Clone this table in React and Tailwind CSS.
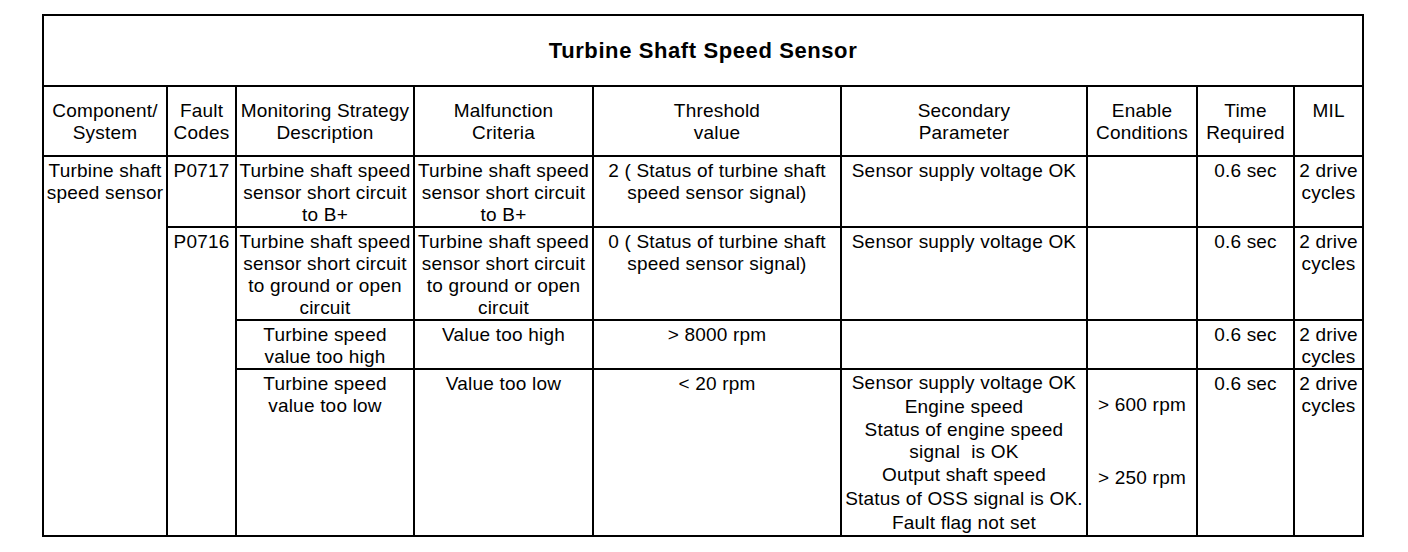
import React from "react"

const th = "border-2 border-black align-top text-center font-normal whitespace-nowrap pt-[13px] px-0"
const td = "border-2 border-black align-top text-center whitespace-nowrap pt-[3px] px-0"

export default function App() {
  return (
    <div className="min-h-screen bg-white pl-[42px] pt-[14px] text-black font-['Liberation_Sans',Arial,sans-serif]">
      <table className="table-fixed border-collapse border-2 border-black w-[1320px] text-[19px] leading-[22px] tracking-[0.2px]">
        <colgroup>
          <col className="w-[124px]" />
          <col className="w-[69px]" />
          <col className="w-[178px]" />
          <col className="w-[179px]" />
          <col className="w-[248px]" />
          <col className="w-[246px]" />
          <col className="w-[110px]" />
          <col className="w-[97px]" />
          <col className="w-[69px]" />
        </colgroup>
        <thead>
          {/* Title */}
          <tr className="h-[71px]">
            <th colSpan={9} className="border-2 border-black text-[22px] font-bold tracking-[0.6px]">
              Turbine Shaft Speed Sensor
            </th>
          </tr>
          {/* Column headers */}
          <tr className="h-[70px]">
            <th className={th + " border-r"}>Component/<br />System</th>
            <th className={th}>Fault<br />Codes</th>
            <th className={th}>Monitoring Strategy<br />Description</th>
            <th className={th}>Malfunction<br />Criteria</th>
            <th className={th}>Threshold<br />value</th>
            <th className={th}>Secondary<br />Parameter</th>
            <th className={th}>Enable<br />Conditions</th>
            <th className={th}>Time<br />Required</th>
            <th className={th}>MIL</th>
          </tr>
        </thead>
        <tbody>
          <tr className="h-[69px]">
            <td rowSpan={4} className={td + " border-r"}>Turbine shaft<br />speed sensor</td>
            <td className={td}>P0717</td>
            <td className={td}>Turbine shaft speed<br />sensor short circuit<br />to B+</td>
            <td className={td}>Turbine shaft speed<br />sensor short circuit<br />to B+</td>
            <td className={td}>2 ( Status of turbine shaft<br />speed sensor signal)</td>
            <td className={td}>Sensor supply voltage OK</td>
            <td className={td}></td>
            <td className={td}>0.6 sec</td>
            <td className={td}>2 drive<br />cycles</td>
          </tr>
          <tr className="h-[93px]">
            <td rowSpan={3} className={td}>P0716</td>
            <td className={td}>Turbine shaft speed<br />sensor short circuit<br />to ground or open<br />circuit</td>
            <td className={td}>Turbine shaft speed<br />sensor short circuit<br />to ground or open<br />circuit</td>
            <td className={td}>0 ( Status of turbine shaft<br />speed sensor signal)</td>
            <td className={td}>Sensor supply voltage OK</td>
            <td className={td}></td>
            <td className={td}>0.6 sec</td>
            <td className={td}>2 drive<br />cycles</td>
          </tr>
          <tr className="h-[45px]">
            <td className={td + " pt-[1px]"}>Turbine speed<br />value too high</td>
            <td className={td + " pt-[1px]"}>Value too high</td>
            <td className={td + " pt-[1px]"}>&gt; 8000 rpm</td>
            <td className={td}></td>
            <td className={td}></td>
            <td className={td + " pt-[1px]"}>0.6 sec</td>
            <td className={td + " pt-[1px]"}>2 drive<br />cycles</td>
          </tr>
          <tr className="h-[166px]">
            <td className={td + " pt-[1px]"}>Turbine speed<br />value too low</td>
            <td className={td + " pt-[1px]"}>Value too low</td>
            <td className={td + " pt-[1px]"}>&lt; 20 rpm</td>
            <td className={td + " pt-0"}>
              <div className="leading-[24px] -mt-[2px]">Sensor supply voltage OK</div>
              <div className="leading-[24px]">Engine speed</div>
              <div>Status of engine speed<br />{"signal\u00a0 is OK"}</div>
              <div className="leading-[24px]">Output shaft speed</div>
              <div className="leading-[24px]">Status of OSS signal is OK.</div>
              <div className="leading-[24px]">Fault flag not set</div>
            </td>
            <td className={td + " pt-[23px]"}>
              <div className="leading-[24px]">&gt; 600 rpm</div>
              <div className="leading-[24px] mt-[49px]">&gt; 250 rpm</div>
            </td>
            <td className={td + " pt-[1px]"}>0.6 sec</td>
            <td className={td + " pt-[1px]"}>2 drive<br />cycles</td>
          </tr>
        </tbody>
      </table>
    </div>
  )
}
